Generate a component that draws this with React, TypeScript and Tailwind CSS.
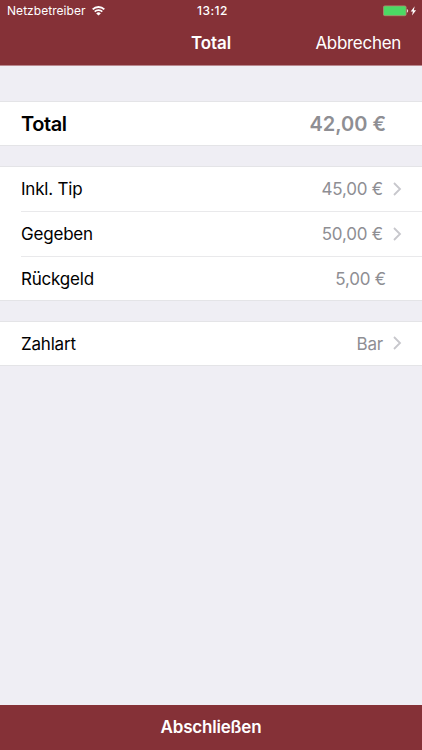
type Row = {
  label: string
  value: string
  link?: boolean
  bold?: boolean
}

// Grouped table sections
const sections: Row[][] = [
  [{ label: 'Total', value: '42,00 €', bold: true }],
  [
    { label: 'Inkl. Tip', value: '45,00 €', link: true },
    { label: 'Gegeben', value: '50,00 €', link: true },
    { label: 'Rückgeld', value: '5,00 €' },
  ],
  [{ label: 'Zahlart', value: 'Bar', link: true }],
]

function WifiIcon() {
  return (
    <svg width="13" height="10" viewBox="0 0 13 10" fill="none" stroke="#fff">
      <path d="M0.7 3.4a8.2 8.2 0 0 1 11.6 0" strokeWidth="1.9" />
      <path d="M2.7 5.7a5.3 5.3 0 0 1 7.6 0" strokeWidth="1.7" />
      <path d="M6.5 9.6 4.2 7.4a3.2 3.2 0 0 1 4.6 0Z" fill="#fff" stroke="none" />
    </svg>
  )
}

function BatteryIcon() {
  return (
    <svg width="34" height="12" viewBox="0 0 34 12">
      <rect x="0.4" y="0.9" width="22.7" height="9.8" rx="1.4" fill="#4cd964" stroke="#b08a72" strokeWidth="0.8" />
      <path d="M23.9 4.1c1.7.4 1.7 3.2 0 3.6Z" fill="#e9d5d6" />
      <path d="M31.7 1.2 27.7 6.4h2.2l-.9 4.1 4.1-5.2h-2.3Z" fill="#fff" />
    </svg>
  )
}

function Chevron() {
  return (
    <svg className="mb-px ml-[10px]" width="9" height="14" viewBox="0 0 9 14" fill="none">
      <path d="M1 1l6 6-6 6" stroke="#c7c7cc" strokeWidth="1.8" />
    </svg>
  )
}

function TableRow({ row, last }: { row: Row; last: boolean }) {
  const offset = last ? 'pt-[3px]' : 'pt-px'

  return (
    <div className="pl-[21px]">
      <div
        className={`flex items-center justify-between ${last ? 'h-[43px]' : 'h-[45px] border-b border-[#e9e9eb]'} ${
          row.bold ? 'text-[20px] font-semibold' : 'text-[17px]'
        }`}
      >
        <span className={row.bold ? 'tracking-[-0.4px] text-black' : `${offset} tracking-[-0.2px] text-black`}>
          {row.label}
        </span>
        <span className={`flex items-center text-[#8e8e93] ${row.link ? 'pr-5' : 'pr-9'}`}>
          <span className={row.bold ? '' : `${offset} tracking-[-0.2px]`}>{row.value}</span>
          {row.link && <Chevron />}
        </span>
      </div>
    </div>
  )
}

export default function App() {
  return (
    <div className="flex h-[750px] w-[422px] flex-col overflow-hidden bg-[#efeef4] font-['Inter',sans-serif]">
      <header className="h-[66px] border-b border-[#b9888e] bg-[#853137] text-white">
        {/* Status bar */}
        <div className="grid h-[22px] grid-cols-3 items-center pr-[5px] pl-[7px] text-[12px]">
          <div className="flex items-center gap-[6px]">
            <span className="tracking-[0.05px]">Netzbetreiber</span>
            <WifiIcon />
          </div>
          <span className="pl-px text-center font-medium tracking-[0.5px]">13:12</span>
          <div className="flex justify-end">
            <BatteryIcon />
          </div>
        </div>
        {/* Navigation bar */}
        <div className="grid h-[43px] grid-cols-[1fr_auto_1fr] items-center px-[21px] text-[17px]">
          <span />
          <h1 className="font-semibold tracking-[-0.1px]">Total</h1>
          <button className="text-right tracking-[-0.3px]">Abbrechen</button>
        </div>
      </header>

      <main className="flex flex-1 flex-col gap-5 pt-[35px]">
        {sections.map((rows, i) => (
          <section key={i} className="border-y border-[#e4e4e7] bg-white">
            {rows.map((row, j) => (
              <TableRow key={row.label} row={row} last={j === rows.length - 1} />
            ))}
          </section>
        ))}
      </main>

      <button className="h-[45px] bg-[#853137] text-[17px] font-semibold tracking-[-0.2px] text-white">
        Abschließen
      </button>
    </div>
  )
}
